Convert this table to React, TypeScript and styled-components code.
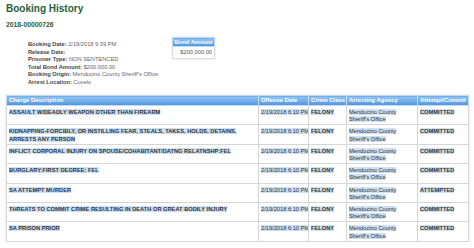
import styled, { createGlobalStyle } from "styled-components";

const GlobalStyle = createGlobalStyle`
  html, body {
    margin: 0;
    padding: 0;
    background: #ffffff;
  }
  body {
    font-family: "Liberation Sans", Arial, sans-serif;
  }
`;

interface Charge {
  description: string;
  offenseDate: string;
  crimeClass: string;
  agency: string;
  status: string;
}

const charges: Charge[] = [
  {
    description: "ASSAULT W/DEADLY WEAPON OTHER THAN FIREARM",
    offenseDate: "2/19/2018 6:10 PM",
    crimeClass: "FELONY",
    agency: "Mendocino County Sheriff's Office",
    status: "COMMITTED",
  },
  {
    description:
      "KIDNAPPING-FORCIBLY, OR INSTILLING FEAR, STEALS, TAKES, HOLDS, DETAINS, ARRESTS ANY PERSON",
    offenseDate: "2/19/2018 6:10 PM",
    crimeClass: "FELONY",
    agency: "Mendocino County Sheriff's Office",
    status: "COMMITTED",
  },
  {
    description: "INFLICT CORPORAL INJURY ON SPOUSE/COHABITANT/DATNG RELATNSHP:FEL",
    offenseDate: "2/19/2018 6:10 PM",
    crimeClass: "FELONY",
    agency: "Mendocino County Sheriff's Office",
    status: "COMMITTED",
  },
  {
    description: "BURGLARY:FIRST DEGREE: FEL",
    offenseDate: "2/19/2018 6:10 PM",
    crimeClass: "FELONY",
    agency: "Mendocino County Sheriff's Office",
    status: "COMMITTED",
  },
  {
    description: "SA ATTEMPT MURDER",
    offenseDate: "2/19/2018 6:10 PM",
    crimeClass: "FELONY",
    agency: "Mendocino County Sheriff's Office",
    status: "ATTEMPTED",
  },
  {
    description: "THREATS TO COMMIT CRIME RESULTING IN DEATH OR GREAT BODILY INJURY",
    offenseDate: "2/19/2018 6:10 PM",
    crimeClass: "FELONY",
    agency: "Mendocino County Sheriff's Office",
    status: "COMMITTED",
  },
  {
    description: "SA PRISON PRIOR",
    offenseDate: "2/19/2018 6:10 PM",
    crimeClass: "FELONY",
    agency: "Mendocino County Sheriff's Office",
    status: "COMMITTED",
  },
];

const bookingInfo = [
  { label: "Booking Date:", value: "2/19/2018 9:39 PM" },
  { label: "Release Date:", value: "" },
  { label: "Prisoner Type:", value: "NON SENTENCED" },
  { label: "Total Bond Amount:", value: "$200,000.00" },
  { label: "Booking Origin:", value: "Mendocino County Sheriff's Office" },
  { label: "Arrest Location:", value: "Covelo" },
];

const columns = [
  { title: "Charge Description", width: 252 },
  { title: "Offense Date", width: 50 },
  { title: "Crime Class", width: 38 },
  { title: "Arresting Agency", width: 71 },
  { title: "Attempt/Commit", width: 51 },
];

const Page = styled.div`
  padding: 3px 6px 0 6px;
`;

const Title = styled.h1`
  margin: 0;
  font-size: 10px;
  line-height: 12px;
  font-weight: bold;
  color: #24613d;
`;

const BookingNumber = styled.h2`
  margin: 6px 0 0 0;
  font-size: 6.8px;
  line-height: 8px;
  font-weight: bold;
  color: #24613d;
`;

const InfoSection = styled.div`
  display: flex;
  align-items: flex-start;
  padding-left: 22px;
  margin-top: 8px;
  height: 58px;
`;

const InfoList = styled.div`
  display: flex;
  flex-direction: column;
  margin-top: 4px;
  width: 144px;
`;

const InfoLine = styled.div`
  font-size: 5.7px;
  line-height: 7.5px;
  color: #666;
  white-space: nowrap;
`;

const InfoLabel = styled.span`
  font-weight: bold;
  color: #444;
`;

const BondTable = styled.table`
  border-collapse: collapse;
  width: 43px;
  box-shadow: 0 0 2px rgba(0, 0, 0, 0.15);
`;

const BondHead = styled.th`
  background: linear-gradient(#93c6f4, #4e94dd);
  color: #fff;
  font-size: 5.8px;
  line-height: 8px;
  font-weight: bold;
  padding: 0 1px;
  border: 1px solid #c2dbf3;
  white-space: nowrap;
`;

const BondCell = styled.td`
  font-size: 5.7px;
  line-height: 11px;
  color: #555;
  text-align: right;
  padding: 0 2px;
  border: 1px solid #ddd;
`;

const ChargeTable = styled.table`
  width: 462px;
  border-collapse: collapse;
  table-layout: fixed;
  box-shadow: 0 0 2px rgba(0, 0, 0, 0.15);
`;

const Column = styled.col<{ $width: number }>`
  width: ${(p) => p.$width}px;
`;

const HeadCell = styled.th`
  background: linear-gradient(#93c6f4, #4f94dd);
  color: #fff;
  font-size: 5.9px;
  line-height: 9px;
  font-weight: bold;
  text-align: left;
  padding: 0 2px;
  border: 1px solid #c4dcf3;
  white-space: nowrap;
  overflow: hidden;
`;

const Cell = styled.td<{ $nowrap?: boolean }>`
  vertical-align: top;
  font-size: 5.7px;
  line-height: 7.2px;
  color: #333;
  padding: 3px 2px 1px 2px;
  border: 1px solid #d6d6d6;
  overflow: hidden;
  white-space: ${(p) => (p.$nowrap ? "nowrap" : "normal")};
`;

const Selected = styled.span<{ $bold?: boolean }>`
  background: #cce0f6;
  font-weight: ${(p) => (p.$bold ? "bold" : "normal")};
`;

export default function App() {
  return (
    <Page>
      <GlobalStyle />
      <Title>Booking History</Title>
      <BookingNumber>2018-00000726</BookingNumber>
      <InfoSection>
        <InfoList>
          {bookingInfo.map((item) => (
            <InfoLine key={item.label}>
              <InfoLabel>{item.label}</InfoLabel> {item.value}
            </InfoLine>
          ))}
        </InfoList>
        <BondTable>
          <thead>
            <tr>
              <BondHead>Bond Amount</BondHead>
            </tr>
          </thead>
          <tbody>
            <tr>
              <BondCell>$200,000.00</BondCell>
            </tr>
          </tbody>
        </BondTable>
      </InfoSection>
      <ChargeTable>
        <colgroup>
          {columns.map((c) => (
            <Column key={c.title} $width={c.width} />
          ))}
        </colgroup>
        <thead>
          <tr>
            {columns.map((c) => (
              <HeadCell key={c.title}>{c.title}</HeadCell>
            ))}
          </tr>
        </thead>
        <tbody>
          {charges.map((c, i) => (
            <tr key={i}>
              <Cell>
                <Selected $bold>{c.description}</Selected>
              </Cell>
              <Cell $nowrap>
                <Selected>{c.offenseDate}</Selected>
              </Cell>
              <Cell>
                <Selected $bold>{c.crimeClass}</Selected>
              </Cell>
              <Cell>
                <Selected>{c.agency}</Selected>
              </Cell>
              <Cell>
                <Selected $bold>{c.status}</Selected>
              </Cell>
            </tr>
          ))}
        </tbody>
      </ChargeTable>
    </Page>
  );
}
